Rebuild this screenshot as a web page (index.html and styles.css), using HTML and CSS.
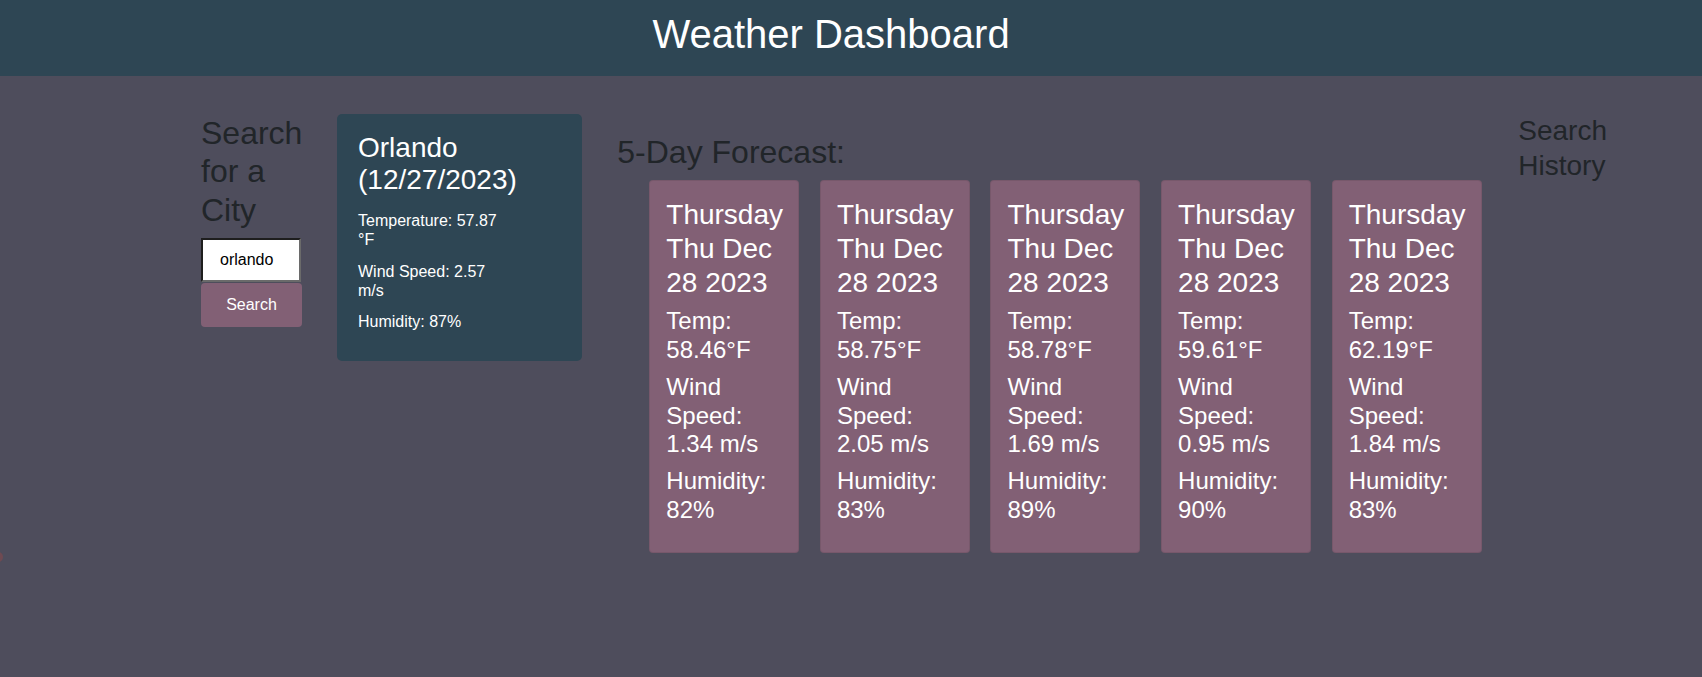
FILE: index.html
```html
<!DOCTYPE html>
<html lang="en">
<head>
<meta charset="utf-8">
<title>Weather Dashboard</title>
<link rel="stylesheet" href="styles.css">
</head>
<body>
<header class="top-bar">
  <h1 class="title">Weather Dashboard</h1>
</header>
<main class="main-row">
  <section class="search-col">
    <h2 class="section-heading">Search for a City</h2>
    <input class="city-input" type="text" value="orlando">
    <button class="search-btn" type="button">Search</button>
  </section>
  <section class="current-card">
    <h3 class="current-title">Orlando (12/27/2023)</h3>
    <p class="current-line">Temperature: 57.87 °F</p>
    <p class="current-line">Wind Speed: 2.57 m/s</p>
    <p class="current-line">Humidity: 87%</p>
  </section>
  <section class="forecast-col">
    <h2 class="forecast-heading">5-Day Forecast:</h2>
    <div class="forecast-row">
      <div class="day-card">
        <h3 class="day-date">Thursday Thu Dec 28 2023</h3>
        <h4 class="day-line">Temp: 58.46°F</h4>
        <h4 class="day-line">Wind Speed: 1.34 m/s</h4>
        <h4 class="day-line">Humidity: 82%</h4>
      </div>
      <div class="day-card">
        <h3 class="day-date">Thursday Thu Dec 28 2023</h3>
        <h4 class="day-line">Temp: 58.75°F</h4>
        <h4 class="day-line">Wind Speed: 2.05 m/s</h4>
        <h4 class="day-line">Humidity: 83%</h4>
      </div>
      <div class="day-card">
        <h3 class="day-date">Thursday Thu Dec 28 2023</h3>
        <h4 class="day-line">Temp: 58.78°F</h4>
        <h4 class="day-line">Wind Speed: 1.69 m/s</h4>
        <h4 class="day-line">Humidity: 89%</h4>
      </div>
      <div class="day-card">
        <h3 class="day-date">Thursday Thu Dec 28 2023</h3>
        <h4 class="day-line">Temp: 59.61°F</h4>
        <h4 class="day-line">Wind Speed: 0.95 m/s</h4>
        <h4 class="day-line">Humidity: 90%</h4>
      </div>
      <div class="day-card">
        <h3 class="day-date">Thursday Thu Dec 28 2023</h3>
        <h4 class="day-line">Temp: 62.19°F</h4>
        <h4 class="day-line">Wind Speed: 1.84 m/s</h4>
        <h4 class="day-line">Humidity: 83%</h4>
      </div>
    </div>
  </section>
  <section class="history-col">
    <h3 class="history-heading">Search History</h3>
  </section>
</main>
<span class="edge-dot"></span>
</body>
</html>
```

FILE: styles.css
```css
* {
  box-sizing: border-box;
}

html, body {
  margin: 0;
  padding: 0;
}

body {
  background: #4e4d5c;
  color: #212529;
  font-family: "Liberation Sans", Arial, sans-serif;
  min-height: 100vh;
  position: relative;
}

.top-bar {
  background: #2e4654;
  height: 76px;
  padding: 10px 40px 0 0;
  text-align: center;
}

.title {
  margin: 0;
  font-size: 40px;
  font-weight: 400;
  line-height: 48px;
  color: #ffffff;
}

.main-row {
  display: flex;
  align-items: flex-start;
  padding: 37px 0 0 201px;
}

.search-col {
  width: 101px;
  margin-top: 1px;
  display: flex;
  flex-direction: column;
  align-items: flex-start;
}

.section-heading {
  margin: 0 0 9px;
  font-size: 32px;
  font-weight: 400;
  line-height: 38.4px;
}

.city-input {
  width: 100px;
  height: 44px;
  margin: 0;
  padding: 0 0 0 17px;
  font-family: "Liberation Sans", Arial, sans-serif;
  font-size: 16px;
  color: #000;
  background: #fff;
  border-style: solid;
  border-width: 2px;
  border-color: #1e1e1e #6a6a6a #6a6a6a #1e1e1e;
  border-radius: 0;
  outline: none;
}

.search-btn {
  width: 101px;
  height: 44px;
  margin-top: 1px;
  padding: 0;
  background: #826075;
  color: #fff;
  border: none;
  border-radius: 4px;
  font-family: "Liberation Sans", Arial, sans-serif;
  font-size: 16px;
  line-height: 24px;
}

.current-card {
  width: 245px;
  margin: 1px 0 0 35px;
  padding: 18px 21px 17px 21px;
  background: #2e4654;
  border-radius: 5px;
  color: #fff;
}

.current-title {
  margin: 0 0 14px;
  max-width: 152px;
  font-size: 28px;
  font-weight: 400;
  line-height: 32.4px;
}

.current-line {
  margin: 0 0 12.7px;
  max-width: 152px;
  font-size: 16px;
  line-height: 19px;
}

.forecast-col {
  width: 865px;
  margin-left: 35.3px;
}

.forecast-heading {
  margin: 20px 0 9px;
  font-size: 32px;
  font-weight: 400;
  line-height: 38.4px;
}

.forecast-row {
  display: flex;
  gap: 20.6px;
  padding-left: 32px;
}

.day-card {
  width: 150px;
  padding: 17px 15px 19px 16px;
  background: #826075;
  border: 1px solid rgba(0, 0, 0, 0.08);
  border-radius: 4px;
  color: #fff;
}

.day-date {
  margin: 0 0 8px;
  font-size: 28px;
  font-weight: 400;
  line-height: 33.6px;
}

.day-line {
  margin: 0 0 8px;
  font-size: 24px;
  font-weight: 400;
  line-height: 28.8px;
}

.history-col {
  width: 100px;
  margin: 1px 0 0 36px;
}

.history-heading {
  margin: 0;
  font-size: 28px;
  font-weight: 400;
  line-height: 34.5px;
}

.edge-dot {
  position: absolute;
  left: -6px;
  top: 552px;
  width: 9px;
  height: 10px;
  border-radius: 50%;
  background: #6e4a52;
}
```
